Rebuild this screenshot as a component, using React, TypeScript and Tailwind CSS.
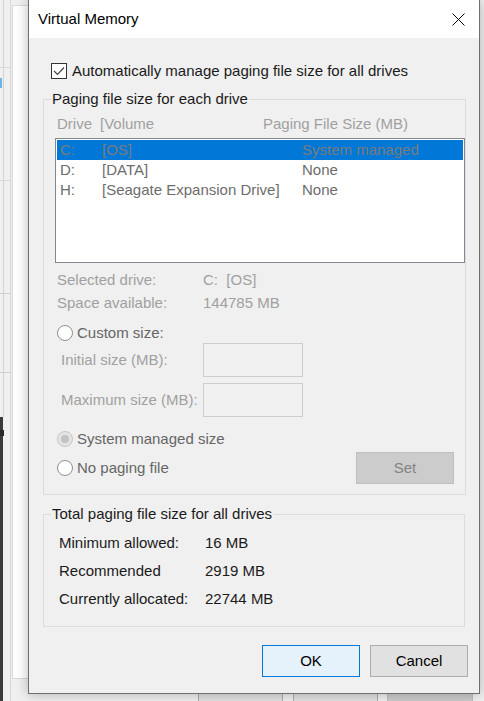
import type { ReactNode } from 'react'

type RadioState = 'off' | 'checkedDisabled'

function Radio({ state, label }: { state: RadioState; label: string }) {
  const disabled = state === 'checkedDisabled'
  return (
    <div className="flex h-[20px] items-center pl-[2px]">
      <span
        className={`grid h-[16px] w-[16px] shrink-0 place-items-center rounded-full border ${
          disabled ? 'border-[#c6c6c6] bg-[#e4e4e4]' : 'border-[#8f8f8f] bg-white'
        }`}
      >
        {disabled && <span className="h-[8px] w-[8px] rounded-full bg-[#c2c2c2]" />}
      </span>
      <span className="ml-[4px] text-[#666]">{label}</span>
    </div>
  )
}

/** Win32 group box: the legend sits on the top border, the padding goes on the inner div. */
function GroupBox({ title, className = '', children }: { title: string; className?: string; children: ReactNode }) {
  return (
    <fieldset className={`border border-[#dcdcdc] ${className}`}>
      <legend className="ml-[7px] px-[1px] leading-[20px] text-[#1a1a1a]">{title}</legend>
      {children}
    </fieldset>
  )
}

const drives = [
  { letter: 'C:', volume: '[OS]', size: 'System managed', selected: true },
  { letter: 'D:', volume: '[DATA]', size: 'None', selected: false },
  { letter: 'H:', volume: '[Seagate Expansion Drive]', size: 'None', selected: false },
]

const totals = [
  ['Minimum allowed:', '16 MB'],
  ['Recommended', '2919 MB'],
  ['Currently allocated:', '22744 MB'],
]

/** Desktop behind the dialog: the System Properties window peeking out. */
function Backdrop() {
  return (
    <div className="absolute inset-0">
      {/* far-left strip of another window */}
      <div className="absolute left-0 top-0 h-full w-[11px] border-r border-[#d6d6d6] bg-[#f0f0f0]">
        <div className="absolute left-[3px] top-0 h-[417px] w-px bg-[#d2d2d2]" />
        <div className="absolute left-0 top-[67px] h-px w-[10px] bg-[#d8d8d8]" />
        <div className="absolute left-0 top-[78px] h-[10px] w-[2px] bg-[#6ab4e8]" />
        <div className="absolute left-0 top-[180px] h-px w-[10px] bg-[#d8d8d8]" />
        <div className="absolute left-0 top-[293px] h-px w-[10px] bg-[#d0d0d0]" />
        <div className="absolute left-0 top-[372px] h-px w-[10px] bg-[#d0d0d0]" />
        <div className="absolute left-0 top-[417px] h-[284px] w-[3px] bg-[#3c3a3b]" />
        <div className="absolute left-0 top-[430px] h-[6px] w-[4px] bg-[#2a2a2a]" />
      </div>
      {/* tab page of System Properties */}
      <div className="absolute left-[12px] top-[5px] h-[674px] w-[468px] border border-[#d9d9d9] bg-white" />
      {/* buttons of the window underneath, mostly hidden by the dialog */}
      <div className="absolute left-[198px] top-[691px] flex gap-[10px] text-[15px] leading-[20px]">
        <span className="h-[30px] w-[85px] border border-[#adadad] bg-[#e1e1e1] pt-[5px] text-center text-black">OK</span>
        <span className="h-[30px] w-[85px] border border-[#adadad] bg-[#e1e1e1] pt-[5px] text-center text-black">Cancel</span>
        <span className="ml-[-1px] h-[30px] w-[86px] border border-[#bfbfbf] bg-[#cccccc] pt-[5px] text-center text-[#838383]">
          Apply
        </span>
      </div>
    </div>
  )
}

export default function App() {
  return (
    <div className="relative h-[701px] w-[484px] overflow-hidden bg-[#f0f0f0] font-['Liberation_Sans',Arial,sans-serif] text-[15px] leading-[20px]">
      <Backdrop />

      <div className="absolute left-[28px] top-0 flex h-[694px] w-[452px] flex-col border border-t-0 border-[#6f6f6f] bg-[#f0f0f0] shadow-[0_0_12px_rgba(0,0,0,0.28)]">
        {/* title bar */}
        <div className="flex h-[38px] shrink-0 items-center justify-between bg-white pl-[9px] pr-[14px]">
          <span className="text-black">Virtual Memory</span>
          <svg width="13" height="13" viewBox="0 0 13 13" className="text-black">
            <path d="M0.5 0.5L12.5 12.5M12.5 0.5L0.5 12.5" stroke="currentColor" strokeWidth="1" />
          </svg>
        </div>

        <div className="flex flex-1 flex-col px-[14px]">
          {/* auto-manage checkbox */}
          <div className="mt-[23px] flex h-[20px] items-center pl-[8px]">
            <span className="grid h-[16px] w-[16px] place-items-center border border-[#333] bg-white">
              <svg width="12" height="10" viewBox="0 0 12 10">
                <path d="M1 5L4.5 8.5L11 1.5" fill="none" stroke="#444" strokeWidth="1.2" />
              </svg>
            </span>
            <span className="ml-[5px] text-[#1a1a1a]">Automatically manage paging file size for all drives</span>
          </div>

          <GroupBox title="Paging file size for each drive" className="mt-[8px]">
            <div className="pb-[10px] pl-[11px]">
              <div className="mt-[5px] flex h-[20px] items-center pl-[2px] text-[#a0a0a0]">
                <span className="w-[43px]">Drive</span>
                <span className="w-[163px]">[Volume</span>
                <span>Paging File Size (MB)</span>
              </div>

              <div className="mt-[4px] h-[125px] w-[410px] border border-[#828790] bg-white p-[1px]">
                {drives.map((d) => (
                  <div
                    key={d.letter}
                    className={`flex h-[20px] items-center pl-[3px] ${
                      d.selected ? 'bg-[#0078d7] text-[#7b7b7b]' : 'text-[#6d6d6d]'
                    }`}
                  >
                    <span className="w-[42px]">{d.letter}</span>
                    <span className="w-[200px]">{d.volume}</span>
                    <span>{d.size}</span>
                  </div>
                ))}
              </div>

              <div className="mt-[5px] text-[#a0a0a0]">
                <div className="flex h-[23px] items-center pl-[2px]">
                  <span className="w-[146px]">Selected drive:</span>
                  <span>C:&nbsp;&nbsp;[OS]</span>
                </div>
                <div className="flex h-[23px] items-center pl-[2px]">
                  <span className="w-[146px]">Space available:</span>
                  <span>144785 MB</span>
                </div>
              </div>

              <div className="mt-[9px]">
                <Radio state="off" label="Custom size:" />
              </div>
              <div className="flex h-[34px] items-center pl-[6px] text-[#a0a0a0]">
                <span className="w-[142px]">Initial size (MB):</span>
                <span className="h-[34px] w-[100px] border border-[#cccccc]" />
              </div>
              <div className="mt-[6px] flex h-[34px] items-center pl-[6px] text-[#a0a0a0]">
                <span className="w-[142px]">Maximum size (MB):</span>
                <span className="h-[34px] w-[100px] border border-[#cccccc]" />
              </div>

              <div className="mt-[12px]">
                <Radio state="checkedDisabled" label="System managed size" />
              </div>
              <div className="mt-[3px] flex h-[32px] items-center justify-between">
                <Radio state="off" label="No paging file" />
                <span className="mr-[11px] grid h-[32px] w-[98px] place-items-center border border-[#bfbfbf] bg-[#cccccc] text-[#838383]">
                  Set
                </span>
              </div>
            </div>
          </GroupBox>

          <GroupBox title="Total paging file size for all drives" className="mt-[9px]">
            <div className="mt-[5px] pb-[13px] pl-[15px] text-[#1a1a1a]">
              {totals.map(([label, value]) => (
                <div key={label} className="flex h-[28px] items-center">
                  <span className="w-[146px]">{label}</span>
                  <span>{value}</span>
                </div>
              ))}
            </div>
          </GroupBox>
        </div>

        {/* dialog buttons */}
        <div className="mb-[16px] flex justify-end gap-[10px] pr-[11px]">
          <button className="h-[32px] w-[98px] border border-[#0078d7] bg-[#e5f1fb] text-black">OK</button>
          <button className="h-[32px] w-[98px] border border-[#adadad] bg-[#e1e1e1] text-black">Cancel</button>
        </div>
      </div>
    </div>
  )
}
